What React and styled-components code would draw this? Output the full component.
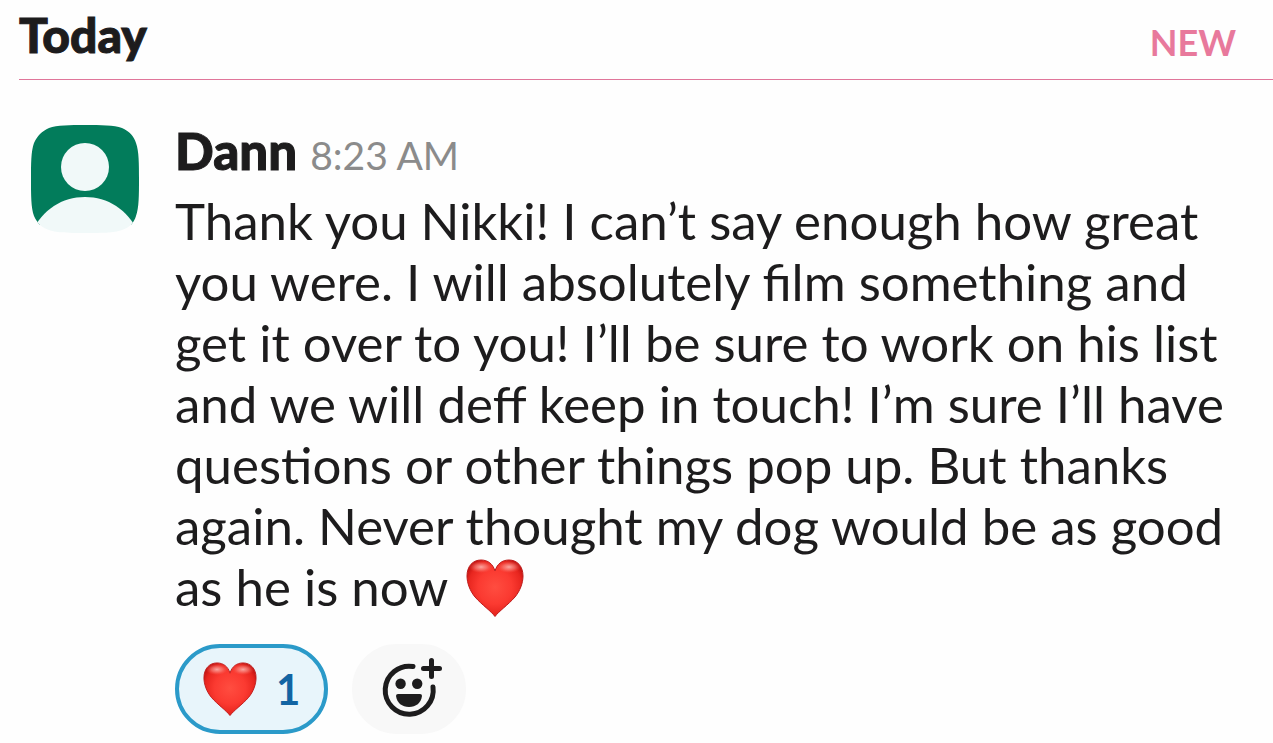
import React, { useState } from 'react';
import styled, { createGlobalStyle } from 'styled-components';

const GlobalStyle = createGlobalStyle`
  * {
    box-sizing: border-box;
  }

  body {
    margin: 0;
    background: #fefefe;
    color: #1d1c1d;
    font-family: Lato, 'Open Sans', sans-serif;
  }
`;

const DayHeader = styled.header`
  display: flex;
  justify-content: space-between;
  align-items: flex-end;
  margin-left: 19px;
  padding: 6px 37px 15px 0;
  border-bottom: 1px solid #e0769a;
`;

const Day = styled.h1`
  margin: 0;
  font-size: 48px;
  font-weight: 900;
  line-height: 58px;
  -webkit-text-stroke: 1px currentColor;
`;

const NewLabel = styled.span`
  color: #e8799c;
  font-size: 36px;
  font-weight: 700;
  line-height: 44px;
`;

const Message = styled.article`
  display: flex;
  align-items: flex-start;
  gap: 36px;
  padding: 40px 37px 9px 31px;
`;

const Avatar = styled.svg`
  flex: none;
  width: 108px;
  height: 108px;
  margin-top: 5px;
`;

const Content = styled.div`
  flex: 1;
  min-width: 0;
`;

const Meta = styled.div`
  display: flex;
  align-items: baseline;
  gap: 13px;
  margin-bottom: 4px;
  line-height: 61px;
`;

const Author = styled.span`
  font-size: 51px;
  font-weight: 900;
  -webkit-text-stroke: 1px currentColor;
`;

const Time = styled.time`
  color: #8b8b8b;
  font-size: 39px;
`;

const Text = styled.p`
  margin: 0;
  font-size: 51px;
  line-height: 61px;
`;

const HeartIcon = styled.svg`
  width: ${({ $size }) => $size}px;
  height: ${({ $size }) => $size}px;
`;

const InlineHeart = styled.span`
  display: inline-flex;
  margin-left: 6px;
  vertical-align: -11px;
`;

const Reactions = styled.div`
  display: flex;
  gap: 24px;
  margin-top: 27px;
`;

const Pill = styled.button`
  display: flex;
  align-items: center;
  justify-content: center;
  height: 90px;
  padding: 0 24px;
  border: 4px solid ${({ $active }) => ($active ? '#2b9ac9' : '#f8f8f8')};
  border-radius: 45px;
  background: ${({ $active }) => ($active ? '#e8f5fb' : '#f8f8f8')};
  color: ${({ $active }) => ($active ? '#1264a3' : '#1d1c1d')};
  font-family: inherit;
  cursor: pointer;
`;

const AddPill = styled(Pill)`
  padding: 0 20px;
`;

const Count = styled.span`
  margin-left: 19px;
  font-size: 42px;
  font-weight: 700;
  line-height: 50px;
`;

const Heart = ({ id, size }) => (
  <HeartIcon $size={size} viewBox="0 0 58 58" aria-hidden="true">
    <defs>
      <radialGradient id={`${id}-fill`} cx="0.5" cy="0.48" r="0.6">
        <stop offset="0" stopColor="#ff4d40" />
        <stop offset="0.5" stopColor="#fb3a31" />
        <stop offset="0.8" stopColor="#e8261f" />
        <stop offset="1" stopColor="#b80f0f" />
      </radialGradient>
      <radialGradient id={`${id}-shine`}>
        <stop offset="0" stopColor="#ffd0cb" stopOpacity="0.75" />
        <stop offset="0.5" stopColor="#ffa79f" stopOpacity="0.45" />
        <stop offset="1" stopColor="#ff6a5e" stopOpacity="0" />
      </radialGradient>
    </defs>
    <path
      d="M29 57.5C25 52 16 46 9 38C4 32 1 24 1 17C1 7 7 1 15 1C22 1 27 5 29 12C31 5 36 1 43 1C51 1 57 7 57 17C57 24 54 32 49 38C42 46 33 52 29 57.5Z"
      fill={`url(#${id}-fill)`}
      stroke="#bd1c1c"
      strokeWidth="1"
      strokeLinejoin="round"
    />
    <ellipse cx="15" cy="8" rx="12" ry="6" fill={`url(#${id}-shine)`} />
    <ellipse cx="43" cy="8" rx="12" ry="6" fill={`url(#${id}-shine)`} />
  </HeartIcon>
);

const AddReactionIcon = () => (
  <svg width="66" height="62" viewBox="0 0 66 62" aria-hidden="true">
    <g fill="none" stroke="#1d1c1d" strokeWidth="5" strokeLinecap="round">
      <path d="M37 8.5A24 24 0 1 0 57 29" />
      <path d="M47.5 10.5H63.5M55.5 2.5V18.5" />
    </g>
    <g fill="#1d1c1d">
      <circle cx="24.6" cy="25.8" r="5.2" />
      <circle cx="41.2" cy="25.8" r="5.2" />
      <path d="M22 36H44Q46 36 46 38C45 45 40 49 33 49C26 49 21 45 20 38Q20 36 22 36Z" />
    </g>
  </svg>
);

const UserAvatar = () => (
  <Avatar viewBox="0 0 108 108" role="img" aria-label="Dann">
    <defs>
      <clipPath id="avatar-shape">
        <path d="M54 0C70 0 83 0 91 3C98 6 103 11 105 18C108 26 108 39 108 54C108 70 108 83 105 91C103 98 98 103 91 105C83 108 70 108 54 108C39 108 26 108 18 105C11 103 6 98 3 91C0 83 0 70 0 54C0 39 0 26 3 18C6 11 11 6 18 3C26 0 39 0 54 0Z" />
      </clipPath>
    </defs>
    <g clipPath="url(#avatar-shape)">
      <path d="M0 0H108V100H0Z" fill="#027c5b" />
      <circle cx="54" cy="42" r="24" fill="#f1f9f9" />
      <path d="M0 108C12 84 31 72 54 72S96 84 108 108Z" fill="#f1f9f9" />
    </g>
  </Avatar>
);

const App = () => {
  const [reacted, setReacted] = useState(true);

  return (
    <>
      <GlobalStyle />
      <DayHeader>
        <Day>Today</Day>
        <NewLabel>NEW</NewLabel>
      </DayHeader>
      <Message>
        <UserAvatar />
        <Content>
          <Meta>
            <Author>Dann</Author>
            <Time dateTime="08:23">8:23 AM</Time>
          </Meta>
          <Text>
            Thank you Nikki! I can’t say enough how great you were. I will absolutely film
            something and get it over to you! I’ll be sure to work on his list and we will deff
            keep in touch! I’m sure I’ll have questions or other things pop up. But thanks again.
            Never thought my dog would be as good as he is now{' '}
            <InlineHeart role="img" aria-label="red heart">
              <Heart id="message-heart" size={58} />
            </InlineHeart>
          </Text>
          <Reactions>
            <Pill
              type="button"
              $active={reacted}
              aria-pressed={reacted}
              aria-label="red heart, 1 reaction"
              onClick={() => setReacted(!reacted)}
            >
              <Heart id="reaction-heart" size={54} />
              <Count>1</Count>
            </Pill>
            <AddPill type="button" aria-label="Add reaction">
              <AddReactionIcon />
            </AddPill>
          </Reactions>
        </Content>
      </Message>
    </>
  );
};

export default App;
